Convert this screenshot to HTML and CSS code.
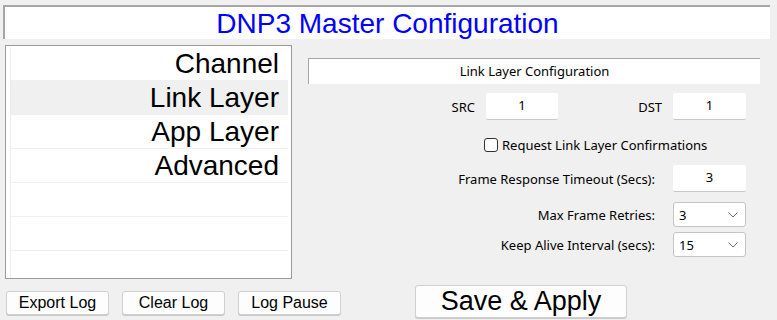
FILE: index.html
```html
<!DOCTYPE html>
<html lang="en">
<head>
    <meta charset="UTF-8">
    <meta name="viewport" content="width=device-width, initial-scale=1.0">
    <title>DNP3 Master Configuration</title>
    <link rel="stylesheet" href="styles.css">
</head>
<body>

    <div class="title">DNP3 Master Configuration</div>

    <div class="main">
        <!-- Menu de secciones -->
        <ul class="menu">
            <li>Channel</li>
            <li class="selected">Link Layer</li>
            <li>App Layer</li>
            <li>Advanced</li>
            <li></li>
            <li></li>
            <li></li>
        </ul>

        <div class="panel">
            <div class="panel-head">Link Layer Configuration</div>

            <div class="addr">
                <span class="lbl">SRC</span>
                <div class="box">1</div>
                <span class="lbl">DST</span>
                <div class="box">1</div>
            </div>

            <div class="check">
                <span class="check-box"></span>
                <span>Request Link Layer Confirmations</span>
            </div>

            <div class="field timeout">
                <span class="lbl">Frame Response Timeout (Secs):</span>
                <div class="box">3</div>
            </div>

            <div class="field retries">
                <span class="lbl">Max Frame Retries:</span>
                <div class="combo">
                    <span>3</span>
                    <svg width="10" height="6" viewBox="0 0 10 6"><path d="M0.5 0.5 L5 5 L9.5 0.5" fill="none" stroke="#6d6d6d" stroke-width="1"/></svg>
                </div>
            </div>

            <div class="field keepalive">
                <span class="lbl">Keep Alive Interval (secs):</span>
                <div class="combo">
                    <span>15</span>
                    <svg width="10" height="6" viewBox="0 0 10 6"><path d="M0.5 0.5 L5 5 L9.5 0.5" fill="none" stroke="#6d6d6d" stroke-width="1"/></svg>
                </div>
            </div>
        </div>
    </div>

    <div class="footer">
        <button class="log-btn">Export Log</button>
        <button class="log-btn">Clear Log</button>
        <button class="log-btn">Log Pause</button>
        <button class="save">Save &amp; Apply</button>
    </div>

</body>
</html>
```

FILE: styles.css
```css
body {
    font-family: 'Liberation Sans', Arial, sans-serif;
    background-color: #f0f0f0;
    margin: 0;
    padding: 0;
    width: 777px;
    height: 320px;
    overflow: hidden;
}

.title {
    margin: 5px 7px 0 3px;
    height: 32px;
    background-color: #fff;
    border-top: 2px solid #a6a6a6;
    border-left: 2px solid #a6a6a6;
    color: #0000ff;
    font-size: 28px;
    line-height: 33px;
    text-align: center;
}

.main {
    display: flex;
    margin-top: 6px;
}

.menu {
    list-style: none;
    margin: 0 0 0 5px;
    padding: 1px 3px 0 4px;
    width: 278px;
    height: 231px;
    overflow: hidden;
    background-color: #fff;
    border: 1px solid #9a9a9a;
}

.menu li {
    height: 33px;
    border-bottom: 1px solid #f0f0f0;
    border-left: 1px solid #ececec;
    font-size: 28px;
    line-height: 34px;
    text-align: right;
    padding-right: 9px;
    color: #000;
}

.menu li.selected {
    background-color: #f0f0f0;
}

.panel {
    margin-left: 16px;
    width: 452px;
    font-family: 'Noto Sans', 'Open Sans', sans-serif;
    font-size: 13px;
    color: #000;
}

.panel-head {
    margin-top: 13px;
    height: 25px;
    line-height: 25px;
    background-color: #fff;
    border-top: 1px solid #a6a6a6;
    border-left: 1px solid #a6a6a6;
    text-align: center;
}

.box {
    height: 26px;
    background-color: #fff;
    border-bottom: 1px solid #c8c8c8;
    border-radius: 2px;
    text-align: center;
    line-height: 24px;
}

.lbl {
    text-align: right;
}

.addr {
    display: grid;
    grid-template-columns: 167px 72px 93px 73px;
    column-gap: 11px;
    align-items: center;
    margin-top: 9px;
}

.check {
    display: flex;
    align-items: center;
    gap: 4px;
    margin: 16px 0 0 176px;
    height: 17px;
}

.check-box {
    width: 12px;
    height: 12px;
    border: 1px solid #333;
    border-radius: 3px;
    background-color: #fff;
}

.field {
    display: grid;
    grid-template-columns: 1fr 73px;
    column-gap: 18px;
    align-items: center;
    padding-right: 14px;
}

.timeout {
    margin-top: 12px;
}

.retries {
    margin-top: 10px;
}

.keepalive {
    margin-top: 5px;
}

.combo {
    display: flex;
    justify-content: space-between;
    align-items: center;
    height: 23px;
    padding: 0 7px 0 5px;
    background-color: #fff;
    border: 1px solid #c4c4c4;
    border-radius: 3px;
    font-size: 13px;
}

.footer {
    display: flex;
    align-items: flex-start;
    margin-top: 6px;
    padding-left: 6px;
}

.log-btn, .save {
    font-family: 'Liberation Sans', Arial, sans-serif;
    background-color: #fdfdfd;
    color: #000;
    border: 1px solid #d0d0d0;
    border-radius: 3px;
    padding: 0;
    box-shadow: 0 1px 0 #c8c8c8;
}

.log-btn {
    width: 103px;
    height: 24px;
    margin-top: 6px;
    margin-right: 13px;
    font-size: 16px;
}

.save {
    width: 212px;
    height: 33px;
    margin-left: 61px;
    font-size: 27px;
}
```
